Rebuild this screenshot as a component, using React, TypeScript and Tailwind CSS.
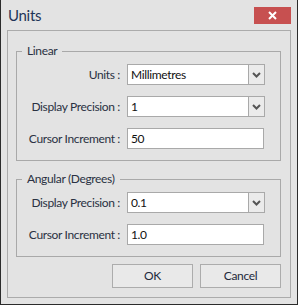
import React from "react";

const font = "font-['Lato','Liberation_Sans',sans-serif]";
const txt = "text-[12px] tracking-[-0.35px]";

function Chevron() {
  return (
    <svg width="9" height="6" viewBox="0 0 9 6" className="block">
      <path d="M1 1 L4.5 4.5 L8 1" fill="none" stroke="#555" strokeWidth="2" />
    </svg>
  );
}

function Row({ label, children }: { label: string; children: React.ReactNode }) {
  return (
    <div className="flex h-[21px] items-center">
      <span className={`w-[103px] whitespace-nowrap text-right text-[#2a3142] ${txt}`}>{label}</span>
      <div className="ml-[7px]">{children}</div>
    </div>
  );
}

function Select({ value }: { value: string }) {
  return (
    <div className="flex h-[21px] w-[138px] border border-[#a9a9a9] bg-white">
      <span className={`flex-1 pl-[3px] leading-[19px] text-[#111] ${txt}`}>{value}</span>
      <span className="flex w-[16px] items-center justify-center border-l border-[#a9a9a9] bg-[#ebebeb]">
        <Chevron />
      </span>
    </div>
  );
}

function TextBox({ value }: { value: string }) {
  return (
    <div className={`h-[21px] w-[137px] border border-[#a9a9a9] bg-white pl-[3px] leading-[19px] text-[#111] ${txt}`}>
      {value}
    </div>
  );
}

function Group({ title, children, className }: { title: string; children: React.ReactNode; className?: string }) {
  return (
    <fieldset className={`border border-[#a9a9a9] pb-[11px] pt-[5px] ${className ?? ""}`}>
      <legend className={`ml-[5px] px-[5px] leading-[16px] text-[#2a3142] ${txt}`}>{title}</legend>
      <div className="flex flex-col gap-[11px]">{children}</div>
    </fieldset>
  );
}

export default function App() {
  return (
    <div className={`flex h-[305px] w-[298px] flex-col border-x border-b border-[#2b2b2b] bg-[#e3e3e3] ${font}`}>
      <div className="flex h-[30px] items-start justify-between pl-[7px] pr-[6px]">
        <span className="mt-[5px] text-[15px] leading-[20px] tracking-[-0.3px] text-[#1e3558]">Units</span>
        <button className="mt-[7px] flex h-[17px] w-[37px] items-center justify-center bg-[#c75050]">
          <svg width="9" height="9" viewBox="0 0 9 9">
            <path d="M1 1 L8 8 M8 1 L1 8" stroke="#fff" strokeWidth="2" />
          </svg>
        </button>
      </div>
      <div className="mx-[6px] h-[268px] border border-[#ababab] pl-[8px] pr-[9px] pt-[12px]">
        <Group title="Linear">
          <Row label="Units :">
            <Select value="Millimetres" />
          </Row>
          <Row label="Display Precision :">
            <Select value="1" />
          </Row>
          <Row label="Cursor Increment :">
            <TextBox value="50" />
          </Row>
        </Group>
        <Group title="Angular (Degrees)" className="mt-[10px]">
          <Row label="Display Precision :">
            <Select value="0.1" />
          </Row>
          <Row label="Cursor Increment :">
            <TextBox value="1.0" />
          </Row>
        </Group>
        <div className="mt-[7px] flex justify-end gap-[7px]">
          <button className={`h-[24px] w-[81px] border border-[#acacac] bg-[#e9e9e9] text-[#1e2a3c] ${txt}`}>OK</button>
          <button className={`h-[24px] w-[81px] border border-[#acacac] bg-[#e9e9e9] text-[#1e2a3c] ${txt}`}>Cancel</button>
        </div>
      </div>
    </div>
  );
}
